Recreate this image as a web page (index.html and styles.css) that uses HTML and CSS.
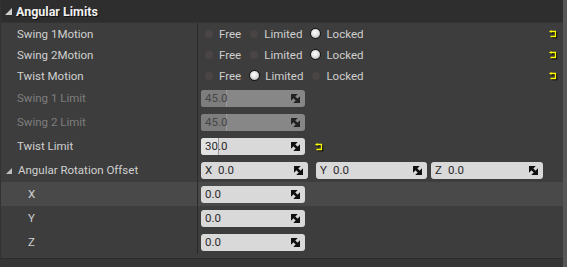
FILE: index.html
```html
<!DOCTYPE html>
<html lang="en">
<head>
  <meta charset="UTF-8">
  <title>Angular Limits</title>
  <link rel="stylesheet" href="styles.css">
</head>
<body>
  <div class="details">
    <div class="panel">
      <div class="header">
        <svg class="caret" width="7" height="7" viewBox="0 0 7 7"><polygon points="7,0 7,7 0,7" /></svg>
        Angular Limits
      </div>

      <div class="row radio-row">
        <div class="name">Swing 1Motion</div>
        <div class="value">
          <label class="radio"><span class="dot"></span>Free</label>
          <label class="radio"><span class="dot"></span>Limited</label>
          <label class="radio"><span class="dot on"></span>Locked</label>
          <svg class="reset push" width="8" height="8" viewBox="0 0 8 8"><path d="M2 1.5 H6.5 V6.5 H1.5" /><polygon points="0,1.5 2.5,0 2.5,3" /></svg>
        </div>
      </div>
      <div class="row radio-row">
        <div class="name">Swing 2Motion</div>
        <div class="value">
          <label class="radio"><span class="dot"></span>Free</label>
          <label class="radio"><span class="dot"></span>Limited</label>
          <label class="radio"><span class="dot on"></span>Locked</label>
          <svg class="reset push" width="8" height="8" viewBox="0 0 8 8"><path d="M2 1.5 H6.5 V6.5 H1.5" /><polygon points="0,1.5 2.5,0 2.5,3" /></svg>
        </div>
      </div>
      <div class="row radio-row">
        <div class="name">Twist Motion</div>
        <div class="value">
          <label class="radio"><span class="dot"></span>Free</label>
          <label class="radio"><span class="dot on"></span>Limited</label>
          <label class="radio"><span class="dot"></span>Locked</label>
          <svg class="reset push" width="8" height="8" viewBox="0 0 8 8"><path d="M2 1.5 H6.5 V6.5 H1.5" /><polygon points="0,1.5 2.5,0 2.5,3" /></svg>
        </div>
      </div>

      <div class="row">
        <div class="name disabled">Swing 1 Limit</div>
        <div class="value">
          <div class="spin off"><span class="fill" style="width: 25px"></span><span class="num">45.0</span>
            <svg class="drag" width="9" height="9" viewBox="0 0 9 9"><polygon points="0,0 5,0 0,5" /><polygon points="9,9 4,9 9,4" /><line x1="1.5" y1="1.5" x2="7.5" y2="7.5" /></svg>
          </div>
        </div>
      </div>
      <div class="row">
        <div class="name disabled">Swing 2 Limit</div>
        <div class="value">
          <div class="spin off"><span class="fill" style="width: 25px"></span><span class="num">45.0</span>
            <svg class="drag" width="9" height="9" viewBox="0 0 9 9"><polygon points="0,0 5,0 0,5" /><polygon points="9,9 4,9 9,4" /><line x1="1.5" y1="1.5" x2="7.5" y2="7.5" /></svg>
          </div>
        </div>
      </div>
      <div class="row">
        <div class="name">Twist Limit</div>
        <div class="value">
          <div class="spin"><span class="fill" style="width: 17px"></span><span class="num">30.0</span>
            <svg class="drag" width="9" height="9" viewBox="0 0 9 9"><polygon points="0,0 5,0 0,5" /><polygon points="9,9 4,9 9,4" /><line x1="1.5" y1="1.5" x2="7.5" y2="7.5" /></svg>
          </div>
          <svg class="reset" width="8" height="8" viewBox="0 0 8 8"><path d="M2 1.5 H6.5 V6.5 H1.5" /><polygon points="0,1.5 2.5,0 2.5,3" /></svg>
        </div>
      </div>

      <div class="row">
        <div class="name group">
          <svg class="caret small" width="6" height="6" viewBox="0 0 6 6"><polygon points="6,0 6,6 0,6" /></svg>
          Angular Rotation Offset
        </div>
        <div class="value vector">
          <div class="spin axis-x"><span class="axis">X</span><span class="num">0.0</span>
            <svg class="drag" width="9" height="9" viewBox="0 0 9 9"><polygon points="0,0 5,0 0,5" /><polygon points="9,9 4,9 9,4" /><line x1="1.5" y1="1.5" x2="7.5" y2="7.5" /></svg>
          </div>
          <div class="spin axis-y"><span class="axis">Y</span><span class="num">0.0</span>
            <svg class="drag" width="9" height="9" viewBox="0 0 9 9"><polygon points="0,0 5,0 0,5" /><polygon points="9,9 4,9 9,4" /><line x1="1.5" y1="1.5" x2="7.5" y2="7.5" /></svg>
          </div>
          <div class="spin axis-z"><span class="axis">Z</span><span class="num">0.0</span>
            <svg class="drag" width="9" height="9" viewBox="0 0 9 9"><polygon points="0,0 5,0 0,5" /><polygon points="9,9 4,9 9,4" /><line x1="1.5" y1="1.5" x2="7.5" y2="7.5" /></svg>
          </div>
        </div>
      </div>

      <div class="row hover">
        <div class="name sub">X</div>
        <div class="value">
          <div class="spin"><span class="num">0.0</span>
            <svg class="drag" width="9" height="9" viewBox="0 0 9 9"><polygon points="0,0 5,0 0,5" /><polygon points="9,9 4,9 9,4" /><line x1="1.5" y1="1.5" x2="7.5" y2="7.5" /></svg>
          </div>
        </div>
      </div>
      <div class="row">
        <div class="name sub">Y</div>
        <div class="value">
          <div class="spin"><span class="num">0.0</span>
            <svg class="drag" width="9" height="9" viewBox="0 0 9 9"><polygon points="0,0 5,0 0,5" /><polygon points="9,9 4,9 9,4" /><line x1="1.5" y1="1.5" x2="7.5" y2="7.5" /></svg>
          </div>
        </div>
      </div>
      <div class="row">
        <div class="name sub">Z</div>
        <div class="value">
          <div class="spin"><span class="num">0.0</span>
            <svg class="drag" width="9" height="9" viewBox="0 0 9 9"><polygon points="0,0 5,0 0,5" /><polygon points="9,9 4,9 9,4" /><line x1="1.5" y1="1.5" x2="7.5" y2="7.5" /></svg>
          </div>
        </div>
      </div>
    </div>
    <div class="scrollbar"></div>
  </div>
</body>
</html>
```

FILE: styles.css
```css
body {
  margin: 0;
  background: #363636;
  font-family: Roboto, 'Liberation Sans', sans-serif;
  font-size: 11.5px;
  color: #d2d2d2;
}

.details {
  display: flex;
  width: 567px;
  height: 267px;
}

.panel {
  width: 562px;
  background: #3d3d3d;
  border-left: 1px solid #333;
  align-self: flex-start;
  padding-bottom: 4px;
  border-bottom: 1px solid #2b2b2b;
}

.scrollbar {
  width: 4px;
  background: #565656;
}

.header {
  height: 22px;
  background: #2e2e2e;
  display: flex;
  align-items: center;
  padding-left: 4px;
  font-weight: bold;
  font-size: 12.5px;
  color: #f0f0f0;
  text-shadow: 1px 1px 0 #111;
  border-bottom: 1px solid #333;
}

.caret {
  fill: #cfcfcf;
  margin-right: 4px;
  margin-top: 1px;
}

.caret.small {
  fill: #bdbdbd;
  margin-right: 6px;
  margin-left: 1px;
}

.row {
  display: flex;
  height: 24px;
}

.radio-row {
  height: 21px;
}

.row.hover {
  background: #494949;
}

.name {
  width: 180px;
  padding-left: 16px;
  border-right: 1px solid #2a2a2a;
  display: flex;
  align-items: center;
  color: #d0d0d0;
}

.name.disabled {
  color: #7e7e7e;
}

.name.group {
  padding-left: 4px;
  width: 192px;
}

.name.sub {
  padding-left: 27px;
  width: 169px;
}

.value {
  flex: 1;
  display: flex;
  align-items: center;
  padding-left: 3px;
  padding-right: 6px;
}

.radio {
  display: flex;
  align-items: center;
  color: #cfcfcf;
  margin-right: 5px;
}

.dot {
  width: 8px;
  height: 8px;
  border-radius: 50%;
  background: #4a4444;
  margin: 0 6px 0 4px;
}

.dot.on {
  width: 9px;
  height: 9px;
  margin: 0 5px 0 3px;
  border: 1.5px solid #111;
  background: radial-gradient(circle at 45% 40%, #ffffff 0%, #e2e2e2 45%, #9a9a9a 100%);
}

.reset {
  fill: #ffff00;
  stroke: #ffff00;
  stroke-width: 1.3;
  filter: drop-shadow(1px 1px 0 #000);
  margin-left: 10px;
  margin-top: 1px;
}

.reset path {
  fill: none;
}

.reset polygon {
  stroke: none;
}

.reset.push {
  margin-left: auto;
}

.spin {
  position: relative;
  width: 104px;
  height: 17px;
  border-radius: 3px;
  background: #d9d9d9;
  color: #2a2a2a;
  display: flex;
  align-items: center;
  overflow: hidden;
}

.spin.off {
  background: #878787;
  color: #454545;
}

.fill {
  position: absolute;
  left: 0;
  top: 0;
  bottom: 0;
  background: #e2e2e2;
  border-right: 1px solid #9a9a9a;
}

.spin.off .fill {
  background: #7d7d7d;
  border-right: 1px solid #9a9a9a;
}

.num {
  position: relative;
  padding-left: 4px;
}

.axis {
  padding-left: 4px;
  width: 9px;
}

.drag {
  margin-left: auto;
  margin-right: 5px;
  fill: #111;
  stroke: #111;
  stroke-width: 2.5;
}

.spin.off .drag {
  fill: #222;
  stroke: #222;
}

.vector .spin {
  flex: none;
}

.axis-x {
  width: 107px;
  margin-right: 8px;
}

.axis-y {
  width: 111px;
  margin-right: 4px;
}

.axis-z {
  width: 112px;
}
```
